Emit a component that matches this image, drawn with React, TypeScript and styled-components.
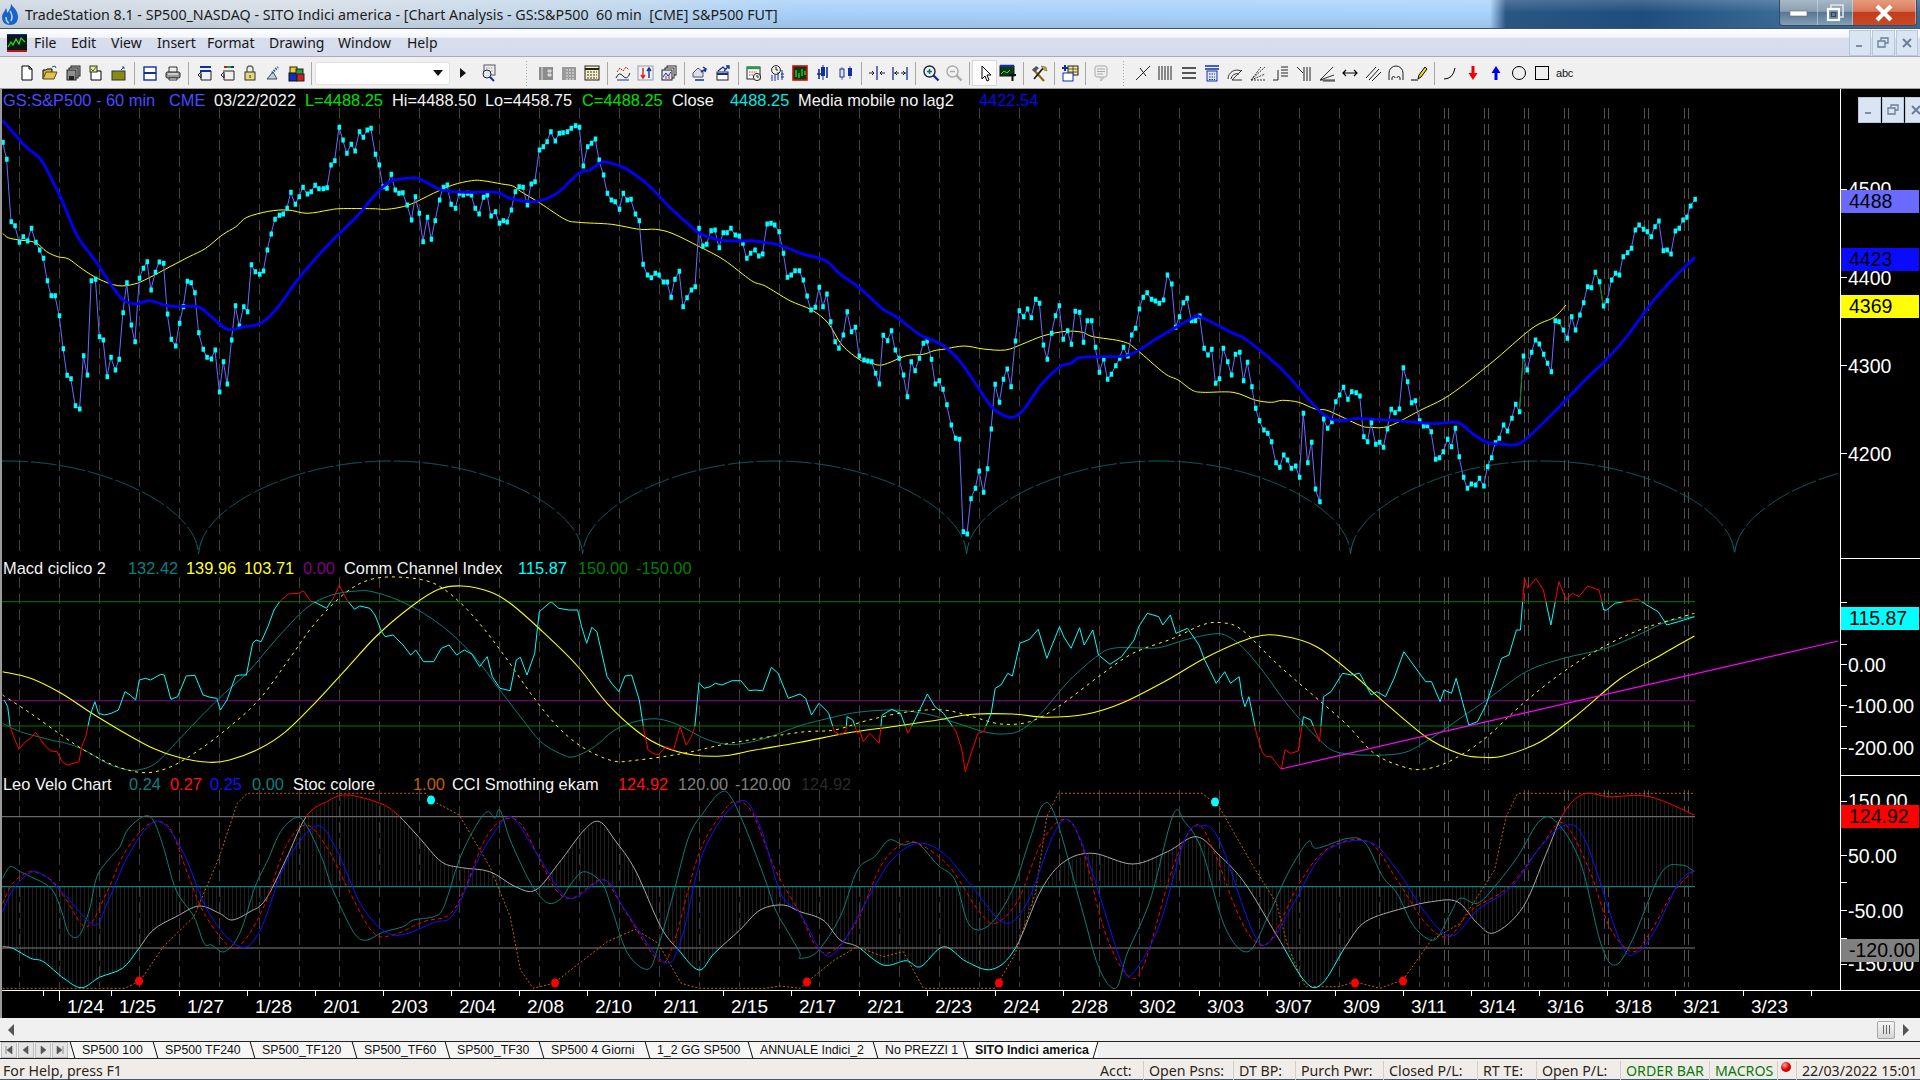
import React from 'react'
import styled, { createGlobalStyle } from 'styled-components'

type Pt = [number, number]

// series were read off zoomed crops, crops are 3x vertically and squeezed horizontally
const pts = (raw: string, xs: number, x0: number, y0: number): Pt[] =>
  raw
    .trim()
    .split(/\s+/)
    .map((p) => {
      const [a, b] = p.split(',').map(Number)
      return [x0 + a / xs, y0 + b / 3] as Pt
    })
const Z10 = (s: string) => pts(s, 1.823, 0, 110)
const Z11 = (s: string) => pts(s, 1.823, 860, 110)
const Z7 = (s: string) => pts(s, 1.96, 0, 550)
const Z8 = (s: string) => pts(s, 1.96, 0, 770)
const Z12 = (s: string) => pts(s, 1.742, 800, 550)
const line = (p: Pt[]) => p.map(([x, y]) => `${x.toFixed(1)},${y.toFixed(1)}`).join(' ')
// catmull-rom, the averages on the real chart are smooth curves
const smooth = (p: Pt[]) => {
  let d = `M${p[0][0].toFixed(1)} ${p[0][1].toFixed(1)}`
  for (let i = 0; i < p.length - 1; i++) {
    const a = p[i - 1] || p[i]
    const b = p[i]
    const c = p[i + 1]
    const e = p[i + 2] || c
    d += `C${(b[0] + (c[0] - a[0]) / 6).toFixed(1)} ${(b[1] + (c[1] - a[1]) / 6).toFixed(1)} ${(c[0] - (e[0] - b[0]) / 6).toFixed(1)} ${(c[1] - (e[1] - b[1]) / 6).toFixed(1)} ${c[0].toFixed(1)} ${c[1].toFixed(1)}`
  }
  return d
}

const price = [
  ...Z10(`5,97 12,148 20,335 27,347 35,397 42,380 50,393 57,355 65,397 72,420 79,445 86,512 93,557 100,557 108,617 115,716 122,796 129,806 137,887 145,897 152,737 159,795 166,512 174,508 181,680 188,690 195,800 202,742 210,780 217,748 224,608 231,518 239,645 246,695 254,505 261,475 268,455 275,540 283,487 290,456 298,460 305,612 312,688 320,708 327,640 334,590 341,514 348,518 355,548 362,668 370,718 377,742 385,747 392,720 400,846 407,755 414,822 422,690 429,587 436,648 444,590 451,605 458,464 465,485 473,493 480,483 487,420 494,372 501,328 509,316 516,312 523,295 530,247 538,283 545,260 552,232 560,252 567,245 574,226 581,236 589,236 596,233 603,165 610,152 618,52 625,90 632,130 640,103 647,123 655,65 662,82 669,60 676,55 684,133 691,165 698,230 705,235 713,193 720,240 727,250 734,248 742,285 750,330 757,260 764,310 771,395 779,322 786,388 793,332 801,270 808,232 815,225 822,283 830,295 837,250 844,255 852,250 859,255 866,295 873,312 881,262 888,255 895,318 903,305 910,340 917,332 924,336 932,300 939,245 946,230 953,232 961,285 968,222 975,215 983,120 990,110 997,95 1004,65 1012,93 1019,70 1026,68 1034,65 1041,55 1049,47 1056,52 1063,168 1071,110 1078,100 1085,87 1092,150 1100,195 1107,250 1114,270 1121,275 1129,298 1136,250 1143,270 1150,268 1158,312 1165,332 1172,463 1180,495 1187,503 1194,490 1201,495 1209,516 1216,516 1223,562 1230,508 1238,484 1245,590 1252,563 1260,540 1267,530 1274,355 1281,408 1288,403 1296,362 1303,360 1311,413 1318,368 1325,368 1332,355 1340,375 1347,378 1354,400 1361,445 1368,430 1376,420 1383,438 1390,432 1398,342 1405,340 1412,345 1420,365 1428,430 1435,502 1442,495 1449,482 1457,482 1464,510 1471,558 1478,600 1486,592 1493,532 1500,590 1507,552 1514,635 1522,695 1529,715 1537,675 1544,605 1552,665 1559,652 1566,738`),
  ...Z11(`7,750 14,753 21,755 28,790 35,822 42,676 50,692 57,662 64,720 71,745 79,795 86,860 93,755 100,782 108,745 115,700 122,693 130,748 137,822 144,812 151,838 158,884 166,945 174,985 181,988 188,1265 195,1272 202,1166 210,1135 217,1083 225,1147 232,1076 239,957 246,823 254,877 261,808 268,777 275,830 283,693 290,602 298,620 305,597 312,623 320,568 327,580 334,705 341,748 349,670 356,617 363,587 370,688 378,662 385,703 392,604 400,607 407,697 414,632 422,632 429,712 436,787 444,747 451,808 458,793 466,767 473,745 480,712 488,738 495,675 502,655 509,597 516,562 523,548 531,568 538,573 545,580 553,570 560,495 568,522 575,652 582,620 589,578 596,565 604,632 611,632 619,618 627,715 634,735 641,718 648,820 655,806 662,715 670,755 677,795 684,733 692,727 699,812 706,757 714,830 721,895 728,932 736,960 743,970 750,995 758,1058 765,1072 772,1035 779,1050 786,1075 794,1068 801,1102 808,910 816,1058 823,997 830,1137 838,1175 845,927 852,955 860,935 867,875 874,855 881,832 889,868 896,845 904,848 911,858 918,980 925,995 932,938 940,1003 947,997 954,1012 961,957 968,898 975,908 983,897 990,773 998,815 1005,878 1012,872 1020,932 1027,948 1034,947 1041,965 1049,1048 1056,1043 1063,1025 1071,988 1078,1010 1085,955 1092,1040 1100,1102 1107,1135 1114,1122 1122,1125 1129,1105 1137,1128 1144,1070 1151,1043 1158,998 1165,985 1173,945 1180,963 1188,925 1195,883 1202,905 1209,738 1216,780 1224,727 1231,690 1238,702 1246,733 1253,760 1260,785 1267,632 1274,635 1282,660 1289,685 1297,620 1304,660 1312,615 1319,578 1326,530 1333,533 1340,487 1348,515 1355,588 1362,572 1370,510 1377,490 1384,495 1391,440 1399,428 1406,415 1413,360 1420,345 1428,358 1435,365 1442,380 1449,350 1456,333 1464,422 1471,420 1478,432 1486,363 1493,355 1500,330 1507,322 1514,288 1522,268`),
]
const priceGreen = [
  Z11('1202,905 1209,738'),
  Z11('1274,635 1282,660'),
  Z11('1340,487 1348,515 1355,588'),
]
const maBlue = [
  ...Z10(`5,32 20,60 50,115 75,150 110,260 140,375 175,455 205,530 225,570 248,582 272,572 300,585 320,590 360,590 385,620 415,658 445,650 475,640 505,595 540,515 570,455 610,385 650,320 680,262 710,215 740,205 765,207 805,240 850,247 905,247 930,265 975,275 1015,250 1055,190 1075,180 1095,158 1110,158 1145,180 1185,230 1220,290 1250,335 1275,370 1300,385 1320,392 1350,393 1375,393 1420,405 1460,430 1505,452 1530,490 1568,535`),
  ...Z11(`40,595 70,625 110,675 150,705 185,760 235,880 255,910 278,922 298,900 330,825 365,770 385,760 400,743 440,740 490,735 545,682 605,625 620,620 680,670 705,690 770,780 830,890 860,928 890,930 910,925 975,932 1020,938 1050,941 1090,938 1120,975 1145,998 1170,1002 1205,998 1260,915 1325,805 1360,750 1400,675 1440,585 1480,510 1522,442`),
]
const maYellow = [
  ...Z10(`5,370 15,383 35,390 65,398 85,425 105,440 125,447 150,477 180,507 215,527 245,522 270,505 310,470 345,440 375,415 405,375 430,350 450,322 490,304 525,300 560,310 600,300 620,296 680,296 705,298 745,285 790,250 825,225 860,212 880,212 915,222 935,228 950,245 985,280 1030,328 1055,337 1115,343 1165,358 1195,358 1225,370 1275,410 1320,450 1370,512 1395,528 1440,572 1480,600 1510,640 1535,705 1568,750`),
  ...Z11(`15,755 40,765 85,737 115,733 135,722 155,717 190,708 225,717 265,720 295,703 335,677 375,664 405,667 425,680 480,695 505,720 555,790 580,810 605,840 625,847 680,847 720,870 750,877 770,871 800,877 830,897 855,903 910,945 930,952 965,948 1020,902 1075,855 1150,760 1225,655 1265,622 1287,585`),
]
const cycle = (() => {
  const out: string[] = []
  for (let x = 2; x < 1838; x += 0.5) {
    const s = Math.abs(Math.sin((Math.PI * (x - 198.6)) / 384))
    out.push(`${x},${(557 - 96 * Math.pow(s, 0.48)).toFixed(1)}`)
  }
  return out.join(' ')
})()

const cci = [
  ...Z7(`8,450 15,470 20,530 28,565 37,598 50,575 60,565 70,547 78,565 90,590 100,603 112,605 122,635 132,645 145,640 155,635 160,590 168,560 172,530 178,490 186,455 193,490 205,495 218,490 232,480 245,425 255,435 266,450 273,390 285,385 295,390 315,373 322,375 335,448 348,440 365,378 382,376 398,435 412,442 425,445 432,480 445,450 462,378 470,375 483,375 495,280 502,270 512,275 525,230 537,180 548,155 565,132 585,130 595,123 610,155 615,155 640,175 655,140 665,105 680,150 695,178 705,168 725,175 735,195 748,245 755,260 770,255 790,285 805,315 815,300 830,335 850,335 865,295 880,285 895,315 910,300 925,312 940,350 955,320 965,380 980,415 1000,422 1012,330 1020,322 1033,375 1048,310 1057,185 1080,155 1095,175 1115,180 1132,180 1140,230 1150,280 1160,232 1170,245 1190,380 1200,402 1213,425 1225,378 1238,375 1253,450 1262,540 1270,600 1280,610 1290,615 1305,590 1320,600 1333,530 1345,585 1355,560 1362,528 1370,398 1380,415 1392,410 1402,400 1415,405 1435,392 1452,392 1468,422 1480,420 1495,422 1512,352 1525,370 1545,445 1568,432`),
  ...Z12(`10,445 20,495 33,460 45,480 50,490 60,545 70,555 80,545 82,500 92,510 100,550 105,545 110,575 122,550 138,580 143,495 160,478 175,490 188,550 200,510 222,432 235,470 250,490 272,545 282,600 288,665 298,610 310,550 320,545 333,490 340,415 350,405 362,370 370,378 383,280 400,268 415,238 430,325 452,230 460,262 472,295 487,233 495,285 510,240 520,315 540,343 560,320 582,270 590,230 605,190 625,200 632,225 645,195 655,250 675,235 695,285 705,330 725,400 740,365 750,400 765,380 770,440 775,470 782,440 795,550 805,605 812,620 820,618 838,657 845,600 855,610 868,603 877,500 890,510 905,575 912,440 925,425 945,370 960,375 975,370 995,435 1005,425 1020,440 1035,385 1052,305 1075,360 1090,395 1100,395 1115,455 1122,420 1135,430 1143,385 1165,525 1180,515 1195,465 1222,325 1235,315 1248,240 1255,240 1262,85 1268,115 1282,85 1295,120 1308,225 1322,95 1335,150 1345,130 1357,140 1372,108 1392,120 1400,180 1405,180 1420,160 1450,150 1460,148 1475,165 1495,185 1510,225 1530,215 1558,200`),
]
const macdTeal = [
  ...Z7(`5,520 40,545 100,570 130,580 165,600 210,640 245,658 270,660 305,640 350,570 400,490 440,430 490,360 540,270 600,175 650,135 700,123 730,125 780,150 830,190 880,245 930,320 975,410 1020,500 1060,575 1100,612 1125,620 1165,590 1205,540 1250,513 1290,507 1330,525 1380,565 1420,582 1450,582 1500,565 1568,527`),
  ...Z12(`50,505 100,487 165,480 220,492 265,515 320,545 355,552 385,540 420,490 470,390 520,315 545,295 580,293 625,293 670,270 715,253 740,255 770,290 805,360 850,465 905,570 945,610 1040,612 1090,575 1150,505 1200,445 1265,365 1330,325 1400,297 1460,255 1510,215 1558,200`),
]
const macdDash = [
  ...Z7(`5,435 60,490 120,555 170,605 230,650 285,668 335,650 390,600 450,530 510,445 570,320 620,215 680,125 730,87 790,82 850,100 900,155 945,230 990,320 1040,430 1090,525 1140,590 1200,632 1250,630 1340,610 1430,580 1568,547`),
  ...Z12(`60,540 120,510 190,485 250,480 300,500 350,522 400,515 450,470 520,380 580,310 650,265 700,225 735,218 770,240 830,340 890,430 950,520 1000,610 1050,650 1085,658 1130,635 1190,570 1260,460 1330,365 1400,290 1470,235 1558,190`),
]
const macdYellow = [
  ...Z7(`5,365 60,385 120,430 180,490 240,545 300,595 350,622 410,637 450,630 510,595 560,545 620,455 680,355 740,255 810,165 860,118 905,108 960,125 1000,160 1060,240 1130,345 1190,460 1250,545 1300,590 1360,615 1420,617 1480,600 1568,577`),
  ...Z12(`80,550 160,530 240,510 300,493 370,492 430,502 500,492 560,460 640,390 710,320 790,262 840,258 900,290 965,375 1010,445 1090,560 1150,612 1190,622 1225,618 1290,575 1350,500 1430,385 1500,315 1558,258`),
]
const velTeal = [
  ...Z8(`5,325 20,290 40,305 60,320 100,355 120,420 135,490 155,497 175,420 190,320 215,265 235,230 250,180 280,140 300,150 320,230 345,360 380,440 400,520 415,525 440,545 470,490 500,350 525,270 550,185 580,143 600,165 630,260 650,350 680,450 700,500 720,510 750,487 790,470 810,450 850,440 870,410 900,270 930,175 955,125 970,145 980,120 1000,210 1030,310 1050,362 1075,400 1100,385 1120,340 1145,305 1180,340 1200,420 1230,550 1270,598 1290,530 1320,370 1350,200 1380,125 1410,70 1430,75 1460,170 1500,330 1520,420 1550,500 1568,550`),
  ...Z12(`0,1225 30,1205 70,1100 100,960 130,920 155,870 180,885 205,880 240,945 270,990 295,1125 330,1125 370,1020 400,870 423,765 445,800 490,1070 520,1250 550,1315 570,1210 610,1050 650,795 670,815 700,900 740,1130 780,1205 815,1100 850,970 885,875 900,895 955,865 985,880 1015,980 1040,1030 1070,1130 1105,1170 1130,1100 1150,1045 1180,1060 1210,1010 1250,920 1290,810 1320,820 1360,940 1395,1180 1420,1245 1450,1170 1500,970 1535,945 1558,965`),
]
const velRed = [
  ...Z8(`5,400 25,340 60,305 100,330 130,390 170,470 210,365 240,260 275,185 305,155 335,180 370,320 400,430 450,530 480,510 520,400 560,230 600,165 640,230 680,350 730,485 770,495 830,455 880,435 910,360 950,210 985,150 1020,160 1055,260 1090,360 1120,385 1150,355 1185,330 1220,410 1290,570 1320,520 1370,250 1420,120 1445,95 1475,130 1520,300 1568,430`),
  ...Z12(`30,1195 60,1200 100,1110 140,950 175,885 205,880 260,950 310,1080 340,1120 380,1050 420,880 460,808 490,880 530,1140 570,1275 600,1240 650,950 690,825 720,900 760,1080 790,1170 820,1170 870,1000 920,895 990,875 1040,990 1090,1120 1130,1160 1170,1080 1235,1010 1290,890 1330,820 1375,960 1410,1130 1450,1205 1480,1150 1520,1030 1558,960`),
]
const velBlue = [
  ...Z8(`5,425 25,360 60,307 90,320 130,380 185,465 210,400 250,260 290,170 320,160 360,250 410,430 470,530 510,480 560,280 620,168 660,240 710,410 770,495 850,458 890,430 940,260 985,155 1010,150 1060,270 1115,385 1185,330 1225,420 1300,575 1335,510 1380,240 1450,93 1490,170 1530,370 1568,430`),
  ...Z12(`40,1210 70,1190 120,1040 160,930 205,880 250,910 300,1010 355,1118 395,1060 440,860 468,810 500,920 560,1240 580,1268 625,1130 670,870 697,828 730,870 790,1150 820,1172 860,1060 915,905 990,875 1040,960 1090,1090 1135,1158 1180,1080 1240,1010 1290,890 1335,825 1370,880 1430,1180 1458,1207 1490,1140 1530,1000 1558,960`),
]
const stoch = [
  ...Z8(`5,530 25,535 60,565 85,575 125,625 160,653 195,622 240,595 270,540 300,480 345,440 390,408 430,430 455,450 490,425 520,390 560,270 600,140 640,95 680,75 745,100 780,135 820,200 865,275 905,293 960,305 1010,350 1050,360 1095,280 1145,180 1175,155 1205,210 1245,300 1295,470 1330,540 1370,600 1400,550 1450,480 1490,420 1535,405 1568,425`),
  ...Z12(`40,1110 70,1170 100,1190 145,1245 185,1232 210,1250 250,1190 290,1235 335,1258 375,1195 420,1020 460,935 510,910 580,942 640,905 690,860 730,915 775,1000 830,1155 880,1295 910,1300 950,1190 985,1115 1050,1075 1100,1055 1145,1055 1180,1120 1210,1148 1260,1070 1300,910 1330,790 1365,732 1410,740 1480,740 1558,795`),
]
const orange = [
  ...Z8(`5,655 245,655 275,632 320,530 380,440 430,260 465,100 485,70 835,70 845,90 900,135 960,290 1000,440 1020,600 1045,655 1085,640 1190,515 1245,478 1290,520 1335,640 1370,655 1500,655 1530,648 1568,655`),
  ...Z12(`20,1285 60,1230 100,1190 145,1220 180,1205 215,1315 340,1315 375,1210 410,1030 430,800 450,730 700,730 730,770 790,950 830,1060 850,1190 880,1310 940,1310 965,1295 1010,1315 1050,1290 1100,1170 1150,1120 1210,960 1230,800 1250,730 1558,730`),
]

const interp = (s: Pt[], x: number) => {
  for (let i = 1; i < s.length; i++) {
    if (x <= s[i][0]) {
      const [x0, y0] = s[i - 1]
      const [x1, y1] = s[i]
      return y0 + ((y1 - y0) * (x - x0)) / (x1 - x0 || 1)
    }
  }
  return s[s.length - 1][1]
}
const hatch = (() => {
  let d = ''
  for (let x = 4.5; x < 1695; x += 4) d += `M${x} 886.7V${interp(stoch, x).toFixed(1)}`
  return d
})()
const markers = price.map(([x, y]) => `M${(x - 1.5).toFixed(1)} ${(y - 2.5).toFixed(1)}h3.5v5h-3.5z`).join('')

const gridX = (() => {
  const single: number[] = []
  for (let x = 19.5; x < 1420; x += 40) single.push(x)
  const double: number[] = []
  for (let x = 1444.5; x < 1700; x += 40) double.push(x, x + 4)
  return { single, double }
})()

const GridLines = ({ top, bottom }: { top: number; bottom: number }) => (
  <g strokeDasharray="11 5" strokeWidth="1">
    {gridX.single.map((x) => (
      <line key={x} x1={x} x2={x} y1={top} y2={bottom} stroke="#404040" />
    ))}
    {gridX.double.map((x) => (
      <line key={x} x1={x} x2={x} y1={top} y2={bottom} stroke="#505050" />
    ))}
  </g>
)

type Leg = [string, string, number]
const W = '#f4f4f4'
const legendMain: Leg[] = [
  ['GS:S&P500 - 60 min', '#4a4aff', 3],
  ['CME', '#4a4aff', 170],
  ['03/22/2022', W, 215],
  ['L=4488.25', '#00e000', 306],
  ['Hi=4488.50', W, 393],
  ['Lo=4458.75', W, 486],
  ['C=4488.25', '#00e000', 583],
  ['Close', W, 673],
  ['4488.25', '#00e8e8', 731],
  ['Media mobile no lag2', W, 799],
  ['4422.54', '#0808e8', 980],
]
const legendMacd: Leg[] = [
  ['Macd ciclico 2', W, 4],
  ['132.42', '#0a8080', 130],
  ['139.96', '#ffff30', 188],
  ['103.71', '#ffff30', 246],
  ['0.00', '#800080', 305],
  ['Comm Channel Index', W, 346],
  ['115.87', '#00ffff', 520],
  ['150.00', '#008000', 580],
  ['-150.00', '#008000', 638],
]
const legendVelo: Leg[] = [
  ['Leo Velo Chart', W, 4],
  ['0.24', '#0a8080', 131],
  ['0.27', '#ff1010', 172],
  ['0.25', '#1010ff', 212],
  ['0.00', '#0a8080', 254],
  ['Stoc colore', W, 295],
  ['1.00', '#c06000', 415],
  ['CCI Smothing ekam', W, 454],
  ['124.92', '#ff1010', 620],
  ['120.00', '#808080', 680],
  ['-120.00', '#808080', 737],
  ['124.92', '#2a2a2a', 803],
]
const Legend = ({ items, top }: { items: Leg[]; top: number }) => (
  <LegendRow $top={top}>
    {items.map(([t, c, x], i) => (
      <LegendItem key={i} $c={c} $w={(items[i + 1]?.[2] ?? x + 80) - x}>
        {t}
      </LegendItem>
    ))}
  </LegendRow>
)

const axisTicks = [189, 277, 365, 453, 558, 602, 644, 664, 685, 705, 726, 748, 801, 855, 882, 910, 938, 964]
const axisLabels: [number, string][] = [
  [189, '4500'],
  [277.5, '4400'],
  [365.5, '4300'],
  [453.5, '4200'],
  [664.5, '0.00'],
  [705.5, '-100.00'],
  [747.5, '-200.00'],
  [801, '150.00'],
  [855.5, '50.00'],
  [910.5, '-50.00'],
  [964, '-150.00'],
]
const axisBadges: [number, number, string, string][] = [
  [190, 213, '#6a6aff', '4488'],
  [248, 271, '#0a0aff', '4423'],
  [295, 318, '#ffff00', '4369'],
  [607, 630, '#00ffff', '115.87'],
  [805, 828, '#ff0000', '124.92'],
  [939, 962, '#808080', '-120.00'],
]
const dates = '1/24 1/25 1/27 1/28 2/01 2/03 2/04 2/08 2/10 2/11 2/15 2/17 2/21 2/23 2/24 2/28 3/02 3/03 3/07 3/09 3/11 3/14 3/16 3/18 3/21 3/23'.split(' ')
const menus: [string, number][] = [
  ['File', 37],
  ['Edit', 40],
  ['View', 46],
  ['Insert', 50],
  ['Format', 62],
  ['Drawing', 69],
  ['Window', 69],
  ['Help', 40],
]
const tabs: [string, number][] = [
  ['SP500 100', 83],
  ['SP500 TF240', 97],
  ['SP500_TF120', 102],
  ['SP500_TF60', 93],
  ['SP500_TF30', 94],
  ['SP500 4 Giorni', 106],
  ['1_2 GG SP500', 103],
  ['ANNUALE Indici_2', 125],
  ['No PREZZI 1', 90],
]
const statusCells: [string, number, string?][] = [
  ['Acct:', 48],
  ['Open Psns:', 90],
  ['DT BP:', 62],
  ['Purch Pwr:', 88],
  ['Closed P/L:', 94],
  ['RT TE:', 59],
  ['Open P/L:', 84],
  ['ORDER BAR', 89, '#0a7a0a'],
  ['MACROS', 68, '#0a7a0a'],
]

const S = { fill: 'none', stroke: '#000', strokeWidth: 1 }
const icons: Record<string, React.ReactNode> = {
  new: <path d="M4 2h7l3 3v11H4zM11 2v3h3" fill="#fff" stroke="#000" />,
  open: (
    <>
      <path d="M2 15V6h3l1-1h5v3" {...S} fill="#d8b840" />
      <path d="M2 15l3-7h11l-3 7z" fill="#e0c050" stroke="#5a4a10" />
      <path d="M11 3l3-1 1 2" fill="none" stroke="#205080" />
    </>
  ),
  saves: (
    <>
      <rect x="7" y="2" width="9" height="10" fill="#b0b0b0" stroke="#222" />
      <rect x="5" y="4" width="9" height="10" fill="#c8c8c8" stroke="#222" />
      <rect x="3" y="6" width="9" height="10" fill="#909090" stroke="#222" />
      <rect x="5" y="12" width="5" height="4" fill="#222" />
    </>
  ),
  checkdoc: (
    <>
      <path d="M4 7h10v9H4z" fill="#fff" stroke="#000" />
      <rect x="3" y="2" width="7" height="6" fill="#f0e890" stroke="#333" />
      <path d="M4 5l2 2 4-5" fill="none" stroke="#208020" />
    </>
  ),
  olive: (
    <>
      <rect x="2" y="7" width="13" height="9" fill="#8a8a10" stroke="#333" />
      <path d="M11 6l3-3m-2 0h2v2" fill="none" stroke="#205090" />
    </>
  ),
  window: (
    <>
      <rect x="3" y="3" width="12" height="13" fill="#fff" stroke="#1030a0" strokeWidth="1.4" />
      <path d="M3 9h12" stroke="#1030a0" strokeWidth="2" />
    </>
  ),
  printer: (
    <>
      <path d="M5 8V3h8v5" fill="#eee" stroke="#333" />
      <rect x="2" y="8" width="14" height="6" rx="1.5" fill="#999" stroke="#222" />
      <path d="M5 14h8v2H5z" fill="#fff" stroke="#333" />
      <path d="M4 10h10" stroke="#fff" />
    </>
  ),
  listL: (
    <>
      <path d="M5 3h11M5 7h11" stroke="#1030a0" strokeWidth="2" />
      <path d="M6 10v6h10V7M3 11l3-3v6z" fill="none" stroke="#222" />
    </>
  ),
  listC: (
    <>
      <path d="M6 3h3" stroke="#c02020" strokeWidth="2" />
      <path d="M9 3h4" stroke="#20a020" strokeWidth="2" />
      <path d="M13 3h3" stroke="#1030a0" strokeWidth="2" />
      <path d="M6 10v6h10V7H5M3 11l3-3v6z" fill="none" stroke="#222" />
    </>
  ),
  lock: (
    <>
      <path d="M6 8V5a3 3 0 0 1 6 0v3" fill="none" stroke="#666" strokeWidth="1.4" />
      <rect x="4" y="8" width="10" height="8" fill="#e8d870" stroke="#333" />
      <path d="M9 11v3" stroke="#333" />
    </>
  ),
  wizard: (
    <>
      <path d="M3 15l6-7 4 7z" fill="#c0d0e0" stroke="#445" />
      <path d="M8 9l6-6" stroke="#2060b0" strokeWidth="2.4" strokeDasharray="1.5 1" />
    </>
  ),
  cubes: (
    <>
      <rect x="3" y="3" width="7" height="7" fill="#f0d020" stroke="#222" />
      <rect x="2" y="9" width="8" height="8" fill="#1030c0" stroke="#111" />
      <rect x="9" y="5" width="7" height="6" fill="#20a040" stroke="#222" />
      <rect x="10" y="10" width="7" height="7" fill="#d02020" stroke="#222" />
    </>
  ),
  finder: (
    <>
      <rect x="5" y="1" width="11" height="10" fill="#eee" stroke="#556" />
      <path d="M7 4h7M7 7h7" stroke="#99a" strokeDasharray="1.5 1" />
      <circle cx="8" cy="10" r="4" fill="#dfe8f5" stroke="#223" />
      <path d="M11 13l4 4" stroke="#1030a0" strokeWidth="2" />
    </>
  ),
  grayBars: (
    <>
      <rect x="2" y="3" width="14" height="13" fill="#8c8c8c" />
      <path d="M5 3v13M11 6h3v2h-3zM11 10h3v2h-3z" stroke="#ddd" fill="#ccc" />
    </>
  ),
  grayTable: (
    <>
      <rect x="2" y="3" width="14" height="13" fill="#9a9a9a" />
      <path d="M6 6h9M6 9h9M6 12h9M6 15h9" stroke="#e8e8e8" strokeDasharray="2 1" />
    </>
  ),
  table: (
    <>
      <rect x="2" y="2" width="14" height="14" fill="#f4f0c0" stroke="#222" />
      <path d="M2 5h14" stroke="#222" strokeWidth="2" />
      <path d="M4 8h10M4 11h10M4 14h10" stroke="#333" strokeDasharray="2 1" />
    </>
  ),
  wave: (
    <>
      <path d="M2 14q3-7 7-2t7-3" fill="none" stroke="#222" />
      <path d="M3 8l3-4 3 3 3-4 3 3" fill="none" stroke="#d02020" strokeDasharray="2 1" />
      <path d="M3 16h12" stroke="#1030a0" />
    </>
  ),
  arrowsBox: (
    <>
      <rect x="1" y="2" width="15" height="14" fill="none" stroke="#99a" />
      <path d="M6 4v9m-2-2l2 3 2-3" fill="none" stroke="#d02020" strokeWidth="1.4" />
      <path d="M12 14V5m-2 2l2-3 2 3" fill="none" stroke="#1030a0" strokeWidth="1.4" />
    </>
  ),
  stack: (
    <>
      <rect x="7" y="2" width="9" height="9" fill="#fff" stroke="#222" />
      <rect x="5" y="4" width="9" height="10" fill="#fff" stroke="#222" />
      <rect x="2" y="6" width="10" height="10" fill="#dfe8f5" stroke="#222" />
      <path d="M3 13l3-4 2 3 3-4" fill="none" stroke="#1030a0" />
      <path d="M6 15v-3M9 15v-4" stroke="#d02020" />
    </>
  ),
  hand1: (
    <>
      <path d="M2 13V9l5-5 5 4v5z" fill="#dde" stroke="#556" />
      <path d="M10 8l5-3m-3-2l3 2-1 3" fill="none" stroke="#1030a0" strokeWidth="1.5" />
      <path d="M4 16h9" stroke="#1030a0" strokeWidth="1.5" />
    </>
  ),
  hand2: (
    <>
      <rect x="3" y="8" width="11" height="8" fill="#fff" stroke="#222" />
      <path d="M3 10h11" stroke="#1030a0" strokeWidth="2" />
      <path d="M4 7l5-4 3 3M10 7l5-5m-3 0h3v3" fill="none" stroke="#1030a0" strokeWidth="1.3" />
    </>
  ),
  cal: (
    <>
      <rect x="2" y="3" width="13" height="12" fill="#fff" stroke="#222" />
      <path d="M2 4h13" stroke="#20a040" strokeWidth="2.5" />
      <path d="M4 8h8M4 11h5" stroke="#d02020" strokeDasharray="1.5 1" />
      <circle cx="12" cy="13" r="3.6" fill="#eee" stroke="#222" />
      <path d="M12 11v2h2" fill="none" stroke="#222" />
    </>
  ),
  clock: (
    <>
      <circle cx="8" cy="6" r="4.4" fill="none" stroke="#222" />
      <path d="M8 3v3h2" fill="none" stroke="#222" />
      <path d="M4 11v6M7 11v6M10 8v8M14 6v10M13 10h3M13 13h3" stroke="#1030a0" />
    </>
  ),
  redchart: (
    <>
      <rect x="2" y="2" width="14" height="14" fill="#083a10" stroke="#d01010" strokeWidth="1.6" />
      <path d="M5 6v7M8 9v5M11 5v7M14 7v4" stroke="#30e030" strokeWidth="1.2" />
    </>
  ),
  bars1: (
    <>
      <path d="M5 5v10M3 10h4M13 3v11" stroke="#1030a0" strokeWidth="1.6" />
      <rect x="7" y="3" width="4" height="9" fill="#1030a0" />
      <path d="M9 1v15" stroke="#1030a0" />
    </>
  ),
  bars2: (
    <>
      <path d="M5 3v13M13 2v13" stroke="#778" />
      <rect x="3" y="5" width="4" height="8" fill="#dfe0ee" stroke="#1030a0" />
      <rect x="11" y="4" width="4" height="8" fill="#1030a0" />
    </>
  ),
  inv: (
    <>
      <path d="M9 2v14" stroke="#1030a0" strokeWidth="1.3" />
      <path d="M1 9h5m-2-2l2 2-2 2M17 9h-5m2-2l-2 2 2 2" fill="none" stroke="#222" />
    </>
  ),
  exp: (
    <>
      <path d="M2 3v13M16 3v13" stroke="#1030a0" strokeWidth="1.3" />
      <path d="M3 9h5m-2-2l-2 2 2 2M15 9h-5m2-2l2 2-2 2" fill="none" stroke="#222" />
    </>
  ),
  zoomIn: (
    <>
      <circle cx="7.5" cy="7.5" r="5.5" fill="#e8f0fa" stroke="#223" strokeWidth="1.4" />
      <path d="M5 7.5h5M7.5 5v5" stroke="#107040" strokeWidth="1.5" />
      <path d="M11.5 11.5l5 5" stroke="#1030a0" strokeWidth="2.4" />
    </>
  ),
  zoomOut: (
    <>
      <circle cx="7.5" cy="7.5" r="5.5" fill="#f2f2f2" stroke="#aaa" strokeWidth="1.4" />
      <path d="M5 7.5h5" stroke="#aaa" strokeWidth="1.5" />
      <path d="M11.5 11.5l5 5" stroke="#aaa" strokeWidth="2.4" />
    </>
  ),
  cursor: <path d="M6 2v13l3-3 2 5 2-1-2-5h4z" fill="#fff" stroke="#000" />,
  chartT: (
    <>
      <rect x="1" y="2" width="14" height="10" fill="#083a10" stroke="#111" />
      <path d="M1 2h14" stroke="#1030a0" strokeWidth="2.5" />
      <path d="M2 10l3-3 3 2 3-3" fill="none" stroke="#30e030" />
      <path d="M10 11h7M13.5 11v6" stroke="#111" strokeWidth="2" />
    </>
  ),
  tools: (
    <>
      <path d="M3 5l11 12" stroke="#8a6a10" strokeWidth="2.2" />
      <path d="M14 3L4 15" stroke="#222" strokeWidth="1.8" />
      <path d="M2 6l4-4 3 2-4 4z" fill="#555" />
      <path d="M11 2l5 1 1 4-3-1z" fill="#c8a820" stroke="#554" strokeWidth=".5" />
    </>
  ),
  addTable: (
    <>
      <rect x="7" y="2" width="10" height="9" fill="#f4e890" stroke="#222" />
      <path d="M7 5h10M7 8h10M12 2v9" stroke="#222" strokeWidth=".7" />
      <rect x="2" y="9" width="10" height="8" fill="#fff" stroke="#1030a0" />
      <path d="M1 4h6M4 1v6" stroke="#1030a0" strokeWidth="2" />
    </>
  ),
  note: (
    <>
      <rect x="3" y="2" width="12" height="11" rx="2" fill="#eee" stroke="#aaa" />
      <path d="M5 5h8M5 7.5h8M5 10h6M9 13v4l3-4" fill="none" stroke="#aaa" />
    </>
  ),
  trend: <path d="M2 16L9 9M16 2l-7 7M6 4l6 8" fill="none" stroke="#222" />,
  vlines: <path d="M2 2v14M5 2v14M8 2v14M11 2v14M14 2v14" stroke="#222" />,
  hlines: <path d="M2 4h14M2 9h14M2 14h14" stroke="#222" strokeWidth="1.4" />,
  calc: (
    <>
      <path d="M2 2h14M2 5h14" stroke="#1030a0" strokeWidth="1.3" />
      <rect x="4" y="7" width="10" height="10" fill="#dde6f4" stroke="#1030a0" />
      <path d="M6 10h6M6 13h6M6 15.5h6" stroke="#1030a0" strokeDasharray="1.5 1" />
    </>
  ),
  arc: <path d="M2 15a9 9 0 0 1 13-8M5 15a6 6 0 0 1 8-5M6 16L16 6M6 16h10" fill="none" stroke="#333" />,
  fan: <path d="M2 16h15M2 16L16 3M2 16l14-6M2 16l10-13" fill="none" stroke="#333" strokeDasharray="2 1" />,
  fork: <path d="M1 16h5V6M9 3h7M9 6h7M9 9h7M9 12h7" fill="none" stroke="#222" />,
  triple: <path d="M2 3l6 6M9 3v14M12 3v14M15 3v14" fill="none" stroke="#222" />,
  angle: <path d="M2 16L15 3M2 16h15M2 16l14-5M5 17h12" fill="none" stroke="#333" />,
  hArrow: <path d="M2 9h14M5 6L2 9l3 3M13 6l3 3-3 3" fill="none" stroke="#000" strokeWidth="1.2" />,
  slashes: <path d="M2 14L12 3M5 16L15 5M8 17L17 8" fill="none" stroke="#222" />,
  arch: <path d="M2 16V9a7 7 0 0 1 14 0v7M5 16v-2a1.5 1.5 0 0 1 3 0M10 14a1.5 1.5 0 0 1 3 0v2" fill="none" stroke="#222" />,
  pencil: (
    <>
      <path d="M1 16h7" stroke="#000" />
      <path d="M8 15l1-4 6-8 2 2-6 8z" fill="#f0e020" stroke="#000" />
    </>
  ),
  curve: <path d="M3 15q9 0 11-11" fill="none" stroke="#000" />,
  down: <path d="M7.5 2h3v7h3L9 16 4.500 9h3z" fill="#f00000" />,
  up: <path d="M9 2l4.500 7h-3v7h-3V9h-3z" fill="#0000f0" />,
  circle: <circle cx="9" cy="9" r="6.500" fill="none" stroke="#000" />,
  square: <rect x="2.500" y="2.500" width="13" height="13" fill="none" stroke="#000" />,
}

const ToolIcon = ({ k, $active }: { k: string; $active?: boolean }) => (
  <ToolButton $active={$active}>
    <svg width="18" height="18" viewBox="0 0 18 18">
      {icons[k]}
    </svg>
  </ToolButton>
)
const ToolGroup = ({ items }: { items: string[] }) => (
  <>
    {items.map((k, i) => (k === '|' ? <ToolSep key={i} /> : <ToolIcon key={i} k={k} $active={k === 'cursor'} />))}
  </>
)

const MdiButtons = () => (
  <MdiRow>
    <MdiButton>
      <svg width="12" height="12" viewBox="0 0 12 12">
        <path d="M2 9h6" stroke="#7a8ea8" strokeWidth="2" />
      </svg>
    </MdiButton>
    <MdiButton>
      <svg width="12" height="12" viewBox="0 0 12 12" fill="none" stroke="#6a7e98" strokeWidth="1.3">
        <path d="M4 3V1h7v5H8.500M1 4h7v6H1z" />
      </svg>
    </MdiButton>
    <MdiButton>
      <svg width="12" height="12" viewBox="0 0 12 12">
        <path d="M2 2l8 8M10 2l-8 8" stroke="#6a7e98" strokeWidth="2" />
      </svg>
    </MdiButton>
  </MdiRow>
)

export default function App() {
  return (
    <Screen>
      <Global />
      <TitleBar>
        <svg width="19" height="23" viewBox="0 0 19 23">
          <path d="M10 1c3 4 7 7 7 13 0 5-3 8-8 8s-8-3-8-8c0-4 3-5 4-9 1 2 1 3 1 5 2-2 4-5 4-9z" fill="#1a62c8" />
          <path d="M9 8c2 3 3 6 1 10M5 14c0 3 1 5 3 6" fill="none" stroke="#a8d4ff" strokeWidth="1.6" />
        </svg>
        <TitleText>TradeStation 8.1 - SP500_NASDAQ - SITO Indici america - [Chart Analysis - GS:S&amp;P500&nbsp; 60 min&nbsp; [CME] S&amp;P500 FUT]</TitleText>
        <WindowButtons>
          <WinBtn $w={38}>
            <svg width="18" height="10" viewBox="0 0 18 10">
              <rect x="0" y="3" width="17" height="5" fill="#fff" stroke="#667" strokeWidth=".6" />
            </svg>
          </WinBtn>
          <WinBtn $w={35}>
            <svg width="20" height="20" viewBox="0 0 20 20" fill="none" stroke="#fff" strokeWidth="2.200">
              <path d="M6 5V2h12v12h-3" stroke="#dfe6ee" strokeWidth="1.600" />
              <rect x="3" y="6" width="11" height="11" />
              <rect x="6.500" y="9.500" width="4" height="4" stroke="#345" strokeWidth="1" />
            </svg>
          </WinBtn>
          <WinBtn $w={63} $close>
            <svg width="20" height="18" viewBox="0 0 20 18">
              <path d="M3 2l14 14M17 2L3 16" stroke="#fff" strokeWidth="4.200" />
            </svg>
          </WinBtn>
        </WindowButtons>
      </TitleBar>
      <MenuBar>
        <svg width="20" height="18" viewBox="0 0 20 18">
          <rect width="20" height="18" fill="#0b1a10" />
          <path d="M0 0h20" stroke="#1030a0" strokeWidth="2" />
          <path d="M1 13l3-5 2 3 3-6 3 5 2-6 4 4" fill="none" stroke="#30e030" strokeWidth="1.200" />
          <path d="M0 17h20" stroke="#c01010" strokeWidth="2" />
        </svg>
        <MenuItems>
          {menus.map(([m, w]) => (
            <MenuItem key={m} $w={w}>
              {m}
            </MenuItem>
          ))}
        </MenuItems>
        <MdiButtons />
      </MenuBar>
      <Toolbar>
        <ToolGroup items={['new', 'open', 'saves', 'checkdoc', 'olive', '|', 'window', 'printer', '|', 'listL', 'listC', 'lock', 'wizard', 'cubes', '|']} />
        <Combo>
          <svg width="10" height="6" viewBox="0 0 10 6">
            <path d="M0 0h10L5 6z" fill="#111" />
          </svg>
        </Combo>
        <PlayArrow>
          <svg width="6" height="10" viewBox="0 0 6 10">
            <path d="M0 0l6 5-6 5z" fill="#111" />
          </svg>
        </PlayArrow>
        <ToolIcon k="finder" />
        <Grip $w={35} />
        <ToolGroup items={['grayBars', 'grayTable', 'table', '|', 'wave', 'arrowsBox', 'stack', '|', 'hand1', 'hand2', '|', 'cal', 'clock', 'redchart', 'bars1', 'bars2', '|', 'inv', 'exp', '|', 'zoomIn', 'zoomOut', '|', 'cursor', 'chartT', '|', 'tools', '|', 'addTable', '|', 'note']} />
        <Grip $w={19} />
        <ToolGroup items={['trend', 'vlines', 'hlines', 'calc', 'arc', 'fan', 'fork', 'triple', 'angle', 'hArrow', 'slashes', 'arch', 'pencil', '|', 'curve', 'down', 'up', 'circle', 'square']} />
        <AbcIcon>abc</AbcIcon>
      </Toolbar>
      <Chart>
        <Panes>
          <PlotColumn>
            <Pane $h={469}>
              <svg width="1838" height="469" viewBox="2 89 1838 469">
                <GridLines top={108} bottom={555} />
                <polyline points={cycle} fill="none" stroke="#0a6c6c" strokeDasharray="26 3" />
                <path d={smooth(maYellow)} fill="none" stroke="#ffff00" strokeWidth="1" />
                <polyline points={line(price)} fill="none" stroke="#6a6aff" strokeWidth="1" />
                {priceGreen.map((p, i) => (
                  <polyline key={i} points={line(p)} fill="none" stroke="#008a00" />
                ))}
                <path d={markers} fill="#00ffff" />
                <path d={smooth(maBlue)} fill="none" stroke="#0000ff" strokeWidth="2.800" strokeLinejoin="round" />
              </svg>
              <Legend items={legendMain} top={1} />
            </Pane>
            <Pane $h={217}>
              <svg width="1838" height="217" viewBox="2 558 1838 217">
                <defs>
                  <clipPath id="cciOut">
                    <rect x="0" y="558" width="1840" height="43.700" />
                    <rect x="0" y="726" width="1840" height="49" />
                  </clipPath>
                  <clipPath id="cciIn">
                    <rect x="0" y="601.700" width="1840" height="124.300" />
                  </clipPath>
                </defs>
                <GridLines top={577} bottom={770} />
                <path d="M2 601.700H1695M2 726H1695" stroke="#007a00" />
                <path d="M2 700.700H1695" stroke="#8a008a" />
                <path d={smooth(macdTeal)} fill="none" stroke="#0a7c7c" />
                <path d={smooth(macdDash)} fill="none" stroke="#ffff00" strokeDasharray="3 4" />
                <path d={smooth(macdYellow)} fill="none" stroke="#ffff00" strokeWidth="1.100" />
                <polyline points={line(cci)} fill="none" stroke="#00ffff" clipPath="url(#cciIn)" />
                <polyline points={line(cci)} fill="none" stroke="#ff0000" clipPath="url(#cciOut)" />
                <path d="M1281 769L1838 641" stroke="#ff00ff" strokeWidth="1.200" />
              </svg>
              <Legend items={legendMacd} top={0} />
            </Pane>
            <Pane $h={215}>
              <svg width="1838" height="215" viewBox="2 775 1838 215">
                <defs>
                  <clipPath id="stHi">
                    <rect x="0" y="775" width="1840" height="41.700" />
                  </clipPath>
                  <clipPath id="stMid">
                    <rect x="0" y="816.700" width="1840" height="131.300" />
                  </clipPath>
                  <clipPath id="stLo">
                    <rect x="0" y="948" width="1840" height="42" />
                  </clipPath>
                </defs>
                <GridLines top={790} bottom={987} />
                <path d={hatch} stroke="#1e1e1e" fill="none" />
                <path d="M2 816.700H1695M2 948H1695" stroke="#808080" />
                <path d="M2 886.700H1695" stroke="#0a8080" strokeWidth="1.200" />
                <polyline points={line(orange)} fill="none" stroke="#c86400" strokeDasharray="2 2" />
                <path d={smooth(velTeal)} fill="none" stroke="#0a8078" />
                <path d={smooth(stoch)} fill="none" stroke="#a8a8a8" clipPath="url(#stMid)" />
                <path d={smooth(stoch)} fill="none" stroke="#ff0000" clipPath="url(#stHi)" />
                <path d={smooth(stoch)} fill="none" stroke="#00ffff" clipPath="url(#stLo)" />
                <path d={smooth(velRed)} fill="none" stroke="#ff0000" strokeDasharray="4 3" />
                <path d={smooth(velBlue)} fill="none" stroke="#1010ff" />
                <ellipse cx="431" cy="800" rx="4" ry="4.500" fill="#00ffff" />
                <ellipse cx="1215" cy="802" rx="4" ry="4.500" fill="#00ffff" />
                {[
                  [139, 981],
                  [555, 983],
                  [807, 982],
                  [999, 983],
                  [1355, 983],
                  [1403, 981],
                ].map(([cx, cy]) => (
                  <ellipse key={cx} cx={cx} cy={cy} rx="4" ry="4.500" fill="#ff0000" />
                ))}
              </svg>
              <Legend items={legendVelo} top={-1} />
            </Pane>
          </PlotColumn>
          <RightAxis>
            {axisTicks.map((y) => (
              <AxisTick key={y} $y={y - 89} />
            ))}
            <AxisRule $y={558 - 89} />
            <AxisRule $y={775 - 89} />
            {axisLabels.map(([y, t]) => (
              <AxisLabel key={t} $y={y - 89 - 11}>
                {t}
              </AxisLabel>
            ))}
            {axisBadges.map(([a, b, c, t]) => (
              <AxisBadge key={t} $top={a - 89} $h={b - a} $bg={c}>
                {t}
              </AxisBadge>
            ))}
            <PaneButtons>
              <MdiButtons />
            </PaneButtons>
          </RightAxis>
        </Panes>
        <TimeAxis>
          {dates.map((d, i) => (
            <TimeLabel key={d} $first={i === 0}>
              {d}
            </TimeLabel>
          ))}
          <TimeLabel />
        </TimeAxis>
      </Chart>
      <HScroll>
        <svg width="6" height="12" viewBox="0 0 6 12">
          <path d="M6 0v12L0 6z" fill="#555" />
        </svg>
        <ScrollThumb>
          <svg width="9" height="9" viewBox="0 0 9 9">
            <path d="M1.500 0v9M4.500 0v9M7.500 0v9" stroke="#666" />
          </svg>
        </ScrollThumb>
        <svg width="6" height="12" viewBox="0 0 6 12">
          <path d="M0 0v12l6-6z" fill="#555" />
        </svg>
      </HScroll>
      <TabBar>
        <TabNav>
          {['M2 1v8M8 1v8L3 5z', 'M7 1v8L2 5z', 'M3 1v8l5-4z', 'M8 1v8M2 1v8l5-4z'].map((d) => (
            <TabNavBtn key={d}>
              <svg width="10" height="10" viewBox="0 0 10 10">
                <path d={d} fill="#555" stroke="#555" strokeWidth=".6" />
              </svg>
            </TabNavBtn>
          ))}
        </TabNav>
        {tabs.map(([t, w]) => (
          <Tab key={t} $w={w}>
            {t}
          </Tab>
        ))}
        <Tab $w={135} $active>
          SITO Indici america
        </Tab>
      </TabBar>
      <StatusBar>
        <StatusHelp>For Help, press F1</StatusHelp>
        {statusCells.map(([t, w, c], i) => (
          <StatusCell key={t} $w={w} $c={c} $noBorder={i === 0}>
            {t}
          </StatusCell>
        ))}
        <StatusCell $w={19}>
          <StatusBall />
        </StatusCell>
        <StatusCell $w={124}>22/03/2022 15:01</StatusCell>
      </StatusBar>
    </Screen>
  )
}

const Global = createGlobalStyle`
  html, body { margin: 0; padding: 0; background: #000; }
  * { box-sizing: border-box; }
`

const Screen = styled.div`
  width: 1920px;
  height: 1080px;
  overflow: hidden;
  display: flex;
  flex-direction: column;
  font-family: 'Liberation Sans', Arial, sans-serif;
`

const TitleBar = styled.div`
  height: 29px;
  flex: none;
  display: flex;
  align-items: center;
  padding-left: 1px;
  border-bottom: 1px solid #46525e;
  background: linear-gradient(180deg, rgba(255, 255, 255, 0.18), rgba(255, 255, 255, 0) 45%, rgba(50, 80, 110, 0.12)),
    linear-gradient(90deg, #cdd6e0 0, #d5dde6 300px, #c0d6ea 600px, #a8d0f8 800px, #a9d3fb 1490px, #2a5684 1506px, #1f4c7c 1640px, #3a6a96 1780px);
`

const TitleText = styled.div`
  margin-left: 5px;
  font-family: 'Noto Sans', sans-serif;
  font-size: 14.25px;
  color: #1c1c1c;
  white-space: nowrap;
`

const WindowButtons = styled.div`
  margin-left: auto;
  margin-right: 3px;
  align-self: flex-start;
  display: flex;
  height: 26px;
  border: 1px solid #3a4a5a;
  border-top: 0;
  border-radius: 0 0 4px 4px;
  overflow: hidden;
`

const WinBtn = styled.div<{ $w: number; $close?: boolean }>`
  width: ${(p) => p.$w}px;
  display: flex;
  align-items: center;
  justify-content: center;
  border-right: 1px solid rgba(220, 230, 240, 0.5);
  background: ${(p) =>
    p.$close
      ? 'linear-gradient(180deg, #e89a7c 0, #d8785a 45%, #c43c1c 50%, #c84a28 100%)'
      : 'linear-gradient(180deg, #a8b8c6 0, #8ba0b2 45%, #5a7690 50%, #80a0b8 100%)'};
`

const MenuBar = styled.div`
  height: 28px;
  flex: none;
  display: flex;
  align-items: center;
  padding: 0 2px 0 7px;
  border-bottom: 1px solid #a8aeb8;
  background: linear-gradient(180deg, #fdfdfe 0, #f4f6fa 30%, #d8deec 35%, #d6dcec 100%);
`

const MenuItems = styled.div`
  display: flex;
  margin-left: 7px;
`

const MenuItem = styled.div<{ $w: number }>`
  width: ${(p) => p.$w}px;
  font-family: 'Noto Sans', sans-serif;
  font-size: 14px;
  color: #161616;
`

const MdiRow = styled.div`
  display: flex;
  gap: 1px;
  margin-left: auto;
`

const MdiButton = styled.div`
  width: 22.500px;
  height: 26px;
  display: flex;
  align-items: center;
  justify-content: center;
  background: #dae5f4;
  border: 1px solid #b6c8da;
`

const Toolbar = styled.div`
  height: 32px;
  flex: none;
  display: flex;
  align-items: center;
  padding: 1px 0 0 15px;
  background: #f0f0f0;
  border-bottom: 1px solid #a0a0a0;
`

const ToolButton = styled.div<{ $active?: boolean }>`
  width: 23px;
  height: 24px;
  flex: none;
  display: flex;
  align-items: center;
  justify-content: center;
  background: ${(p) => (p.$active ? '#fbfbfb' : 'transparent')};
  outline: ${(p) => (p.$active ? '1px solid #d8d8d8' : 'none')};
`

const ToolSep = styled.div`
  width: 8px;
  height: 23px;
  flex: none;
  background: linear-gradient(#a8a8a8, #a8a8a8) center / 1px 100% no-repeat;
`

const Grip = styled.div<{ $w: number }>`
  width: ${(p) => p.$w}px;
  height: 26px;
  flex: none;
  background: radial-gradient(circle, #a8a8a8 0.8px, transparent 1px) right 6px top / 3px 3px repeat-y;
`

const Combo = styled.div`
  width: 135px;
  height: 23px;
  flex: none;
  display: flex;
  align-items: center;
  justify-content: flex-end;
  padding-right: 6px;
  background: #fff;
  border: 1px solid #e2e2e2;
  border-radius: 3px;
`

const PlayArrow = styled.div`
  width: 26px;
  flex: none;
  display: flex;
  justify-content: center;
`

const AbcIcon = styled.div`
  width: 23px;
  flex: none;
  text-align: center;
  font-family: 'Liberation Sans', sans-serif;
  font-size: 11px;
  letter-spacing: -0.3px;
  color: #111;
`

const Chart = styled.div`
  flex: none;
  height: 929px;
  background: #000;
  display: flex;
  flex-direction: column;
  border-left: 2px solid #9a9a9a;
`

const Panes = styled.div`
  display: flex;
  height: 901px;
`

const PlotColumn = styled.div`
  width: 1838px;
  display: flex;
  flex-direction: column;
`

const Pane = styled.div<{ $h: number }>`
  position: relative;
  height: ${(p) => p.$h}px;
  svg {
    display: block;
  }
`

const LegendRow = styled.div<{ $top: number }>`
  position: absolute;
  top: ${(p) => p.$top}px;
  left: 0;
  display: flex;
  height: 20px;
  line-height: 20px;
  font-size: 16.4px;
  white-space: nowrap;
`

const LegendItem = styled.div<{ $c: string; $w: number }>`
  width: ${(p) => p.$w}px;
  color: ${(p) => p.$c};
  flex: none;
  &:first-child {
    padding-left: 1px;
  }
`

const RightAxis = styled.div`
  position: relative;
  width: 80px;
  border-left: 1px solid #fff;
  color: #fff;
  font-size: 19.500px;
`

const AxisTick = styled.div<{ $y: number }>`
  position: absolute;
  left: 0;
  top: ${(p) => p.$y}px;
  width: 6px;
  height: 1px;
  background: #fff;
`

const AxisRule = styled.div<{ $y: number }>`
  position: absolute;
  left: 0;
  right: 0;
  top: ${(p) => p.$y}px;
  height: 1px;
  background: #fff;
`

const AxisLabel = styled.div<{ $y: number }>`
  position: absolute;
  left: 7px;
  top: ${(p) => p.$y}px;
  line-height: 22px;
  white-space: nowrap;
`

const AxisBadge = styled.div<{ $top: number; $h: number; $bg: string }>`
  position: absolute;
  left: 0;
  right: 1px;
  top: ${(p) => p.$top}px;
  height: ${(p) => p.$h}px;
  line-height: ${(p) => p.$h}px;
  padding-left: 8px;
  background: ${(p) => p.$bg};
  color: #000;
  white-space: nowrap;
`

const PaneButtons = styled.div`
  position: absolute;
  top: 8px;
  left: 17px;
  width: 63px;
  overflow: hidden;
  display: flex;
  div {
    flex: none;
  }
`

const TimeAxis = styled.div`
  display: flex;
  height: 28px;
  padding-left: 65px;
  border-top: 1px solid #fff;
  color: #fff;
  font-size: 19px;
  line-height: 22px;
`

const TimeLabel = styled.div<{ $first?: boolean }>`
  position: relative;
  width: ${(p) => (p.$first ? 52 : 68)}px;
  flex: none;
  padding-top: 5px;
  &::before {
    content: '';
    position: absolute;
    left: -8px;
    top: 0;
    width: 1px;
    height: ${(p) => (p.$first ? 10 : 5)}px;
    background: #fff;
  }
  &::after {
    content: '';
    display: ${(p) => (p.$first ? 'block' : 'none')};
    position: absolute;
    left: -24px;
    top: 0;
    width: 1px;
    height: 5px;
    background: #fff;
  }
`

const HScroll = styled.div`
  height: 23px;
  flex: none;
  display: flex;
  align-items: center;
  padding: 0 11px 0 8px;
  background: #f0f0f0;
  > svg:last-child {
    margin-left: 8px;
  }
`

const ScrollThumb = styled.div`
  margin-left: auto;
  width: 18px;
  height: 18px;
  display: flex;
  align-items: center;
  justify-content: center;
  background: linear-gradient(180deg, #f6f6f6, #d6d6d6);
  border: 1px solid #a8a8a8;
  border-radius: 2px;
`

const TabBar = styled.div`
  height: 18px;
  flex: none;
  display: flex;
  overflow: hidden;
  background: #f0f0f0;
  border-top: 1px solid #222;
  border-bottom: 1px solid #222;
  padding-left: 1px;
`

const TabNav = styled.div`
  display: flex;
  width: 69px;
  gap: 1px;
`

const TabNavBtn = styled.div`
  width: 16px;
  display: flex;
  align-items: center;
  justify-content: center;
  background: #e4e4e4;
  border: 1px solid #c0c0c0;
`

const Tab = styled.div<{ $w: number; $active?: boolean }>`
  position: relative;
  flex: none;
  width: ${(p) => p.$w}px;
  padding-left: 12px;
  font-size: 12.300px;
  line-height: 16px;
  white-space: nowrap;
  color: #111;
  font-weight: ${(p) => (p.$active ? 700 : 400)};
  background: ${(p) => (p.$active ? '#fff' : '#f6f6f6')};
  &::before {
    content: '';
    position: absolute;
    left: 2px;
    top: 0;
    bottom: 0;
    width: 1px;
    background: #111;
    transform: skewX(16deg);
  }
  &::after {
    content: '';
    display: ${(p) => (p.$active ? 'block' : 'none')};
    position: absolute;
    right: 2px;
    top: 0;
    bottom: 0;
    width: 1px;
    background: #111;
    transform: skewX(-16deg);
  }
`

const StatusBar = styled.div`
  height: 21px;
  flex: none;
  display: flex;
  align-items: center;
  padding: 2px 0 0 3px;
  background: #f0ede8;
  border-bottom: 1px solid #3a5a78;
  font-family: 'Noto Sans', sans-serif;
  font-size: 14.200px;
  color: #2c2418;
`

const StatusHelp = styled.div`
  margin-right: auto;
`

const StatusCell = styled.div<{ $w: number; $c?: string; $noBorder?: boolean }>`
  width: ${(p) => p.$w}px;
  height: 19px;
  flex: none;
  display: flex;
  align-items: center;
  padding-left: 5px;
  white-space: nowrap;
  color: ${(p) => p.$c || 'inherit'};
  border-left: ${(p) => (p.$noBorder ? 'none' : '1px solid #d4d0c8')};
`

const StatusBall = styled.div`
  width: 10px;
  height: 10px;
  margin-left: -2px;
  margin-top: -6px;
  border-radius: 50%;
  background: radial-gradient(circle at 35% 30%, #ff9a9a, #e00000 50%, #800000);
`
